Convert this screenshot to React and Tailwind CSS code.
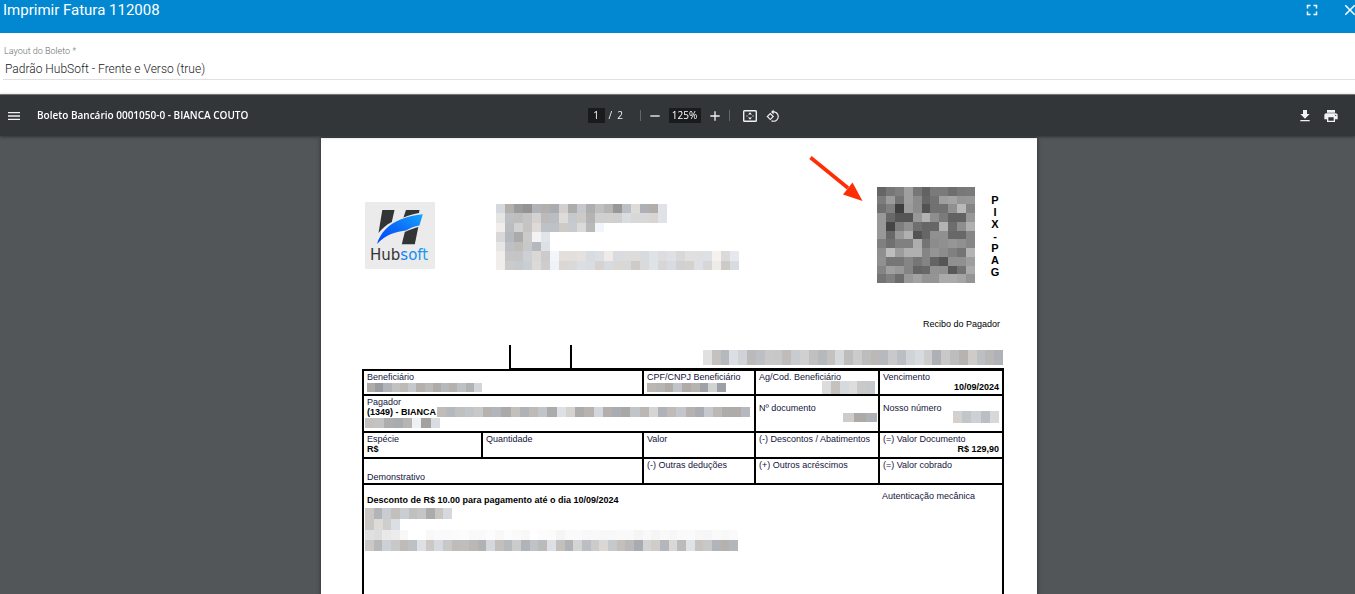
import React from "react";
import { MdFullscreen, MdClose, MdMenu, MdFileDownload, MdPrint, MdRemove, MdAdd } from "react-icons/md";

// Each cell is a two-digit hex grey, optionally followed by "w" (warm) or "c" (cool).
function tone(cell) {
  const v = parseInt(cell.slice(0, 2), 16);
  if (cell[2] === "w") return `rgb(${v + 3},${v - 1},${v - 4})`;
  if (cell[2] === "c") return `rgb(${v - 3},${v},${v + 4})`;
  return `rgb(${v},${v},${v})`;
}

function Mosaic({ rows, className }) {
  const grid = rows.map((r) => r.split(" "));
  const cols = Math.max(...grid.map((r) => r.length));
  return (
    <svg
      aria-hidden="true"
      className={`block shrink-0 ${className}`}
      viewBox={`0 0 ${cols} ${grid.length}`}
      preserveAspectRatio="none"
      shapeRendering="crispEdges"
    >
      {grid.map((row, y) =>
        row.map((cell, x) => <rect key={`${x}-${y}`} x={x} y={y} width="1" height="1" fill={tone(cell)} />)
      )}
    </svg>
  );
}

const address = [
  "d8c b0w 9b 93 b3c b0w acc d0w ac c8c ae c0 b5w 98 bfc dcw b0c aew e2c",
  "e4 bfc be c4 d2w bb bdc dcw c8c cbw b4 d0 d0 cf dcc d8 d8 d6w e2c",
  "eew bcc d2 c4w dbw c1c c1c cbw cac da b9 f5c",
  "d8 b9c ab ca f3 e4c",
  "e6 c0c bdw c8 b8c e0c",
  "eew c5 c5 cfc d8w cb f5c e0w e0w e2w dbc dec ecw dbc dc dc dac e2c dd e0c d8 e0 df e0c f2w da e8c",
  "eew cb c9c cdc da cd f2c d8w d9 dec dcc d3w dac d8w d8 cbw da e2c d6 dbc d1 d2w dfc d7 ecw cbw dbc",
];

const qr = [
  "66 77 80 9f 77 62 7a 7a 6e 78 7a",
  "7c 9c 74 9f 8b 66 72 9f a4 96 98",
  "70 80 3f 9c 8c 52 71 71 90 b9 85",
  "98 68 55 55 98 b2 8e 7b 62 62 98",
  "98 45 7e 90 6f 66 66 b3 6d 8e b0",
  "98 68 98 b0 54 66 90 90 68 68 86",
  "80 70 80 80 ad 74 8c 90 96 90 86",
  "8f bd 9c b0 b0 85 94 8c 80 74 b4",
  "90 76 76 85 76 84 64 55 90 90 9e",
  "84 a0 98 84 64 68 92 90 58 72 aa",
  "74 80 6c 98 a2 94 94 aa aa a4 94",
];

const digitableLine = [
  "e0 c2w b8c dec d2c ba bfc c8 c7 bdw cbc d0 c0 b8c c2w d8c bd cb bd b9w b9c c9 bec d3c dac cd b0c c8 bd b4w ccw bfc b8 b2c",
];
const payer = [
  "bdw b8c c0 c4c c8 b3w b5c aa c0w b2c bbw c4c ab e0c d3w ac b4w d6c b0w acc a8 c4c b8w d5 b2c bcw c6c b3w acc c8c b9w ac acw b8c",
];
const demo1 = ["c8w b4c ccc c0w cdc c0 c5 ab c6w d8c"];
const demo2 = ["c8w dbw ce dec"];
const demo3 = [
  "e0 dd e9 ec f8 ff ff f8 fa fa fb fc f9 f9 fc f8 fc fa f8 ff fc fb f5 fa fa f8 f9 f8 f8 f9 f9 f5 f9 f5 f9 f7 fa fa f7 f6 fa f8 fa",
];
const demo4 = [
  "c9w b8 d0c c8 bcw c0c e0c c9w d9c c8 bdw be b8w b2 d7c c0w b9c cb b3c c2c bb dfc c0w b2c d4 bec cb d8w c8c c0w b9 abc d3 cdw b6c d8 bb e2c c4w c8 b4c b2w b6c",
];

function HubsoftLogo() {
  return (
    <svg role="img" aria-label="Hubsoft" className="mt-[15px] h-[67px] w-[70px] shrink-0" viewBox="0 0 70 67">
      <defs>
        <linearGradient id="swoosh" x1="0" y1="1" x2="1" y2="0">
          <stop offset="0" stopColor="#0046ff" />
          <stop offset="0.5" stopColor="#0b6cf8" />
          <stop offset="1" stopColor="#16a4ff" />
        </linearGradient>
        <linearGradient id="wordmark" x1="0" y1="0" x2="1" y2="0">
          <stop offset="0" stopColor="#0a50fa" />
          <stop offset="1" stopColor="#18a0f2" />
        </linearGradient>
      </defs>
      <rect width="70" height="67" fill="#ebebeb" />
      <path d="M17.300 8h12.200l-2.700 12C21 23 17.300 26.500 13.500 31z" fill="#333436" />
      <path d="M41 8h13.500l-.6 3C49 11.900 44 13.200 38.400 15.500z" fill="#333436" />
      <path d="M39.800 30C44 28 49 26.200 53.300 25L49.800 42.300H36.800z" fill="#333436" />
      <path d="M12 42C15 31.500 23.500 22 35.500 17.500C43 14.500 50 13.200 57.800 12.300L54.400 23.500C49.500 24.200 45.500 26 41 28.500C31.500 29.500 20.500 32.500 12 42z" fill="url(#swoosh)" />
      <text x="5" y="58" fontSize="15" fontFamily="DejaVu Sans, sans-serif" fill="#333436">
        Hub<tspan fill="url(#wordmark)">soft</tspan>
      </text>
    </svg>
  );
}

function FitPageIcon() {
  return (
    <svg viewBox="0 0 14 12" className="h-3 w-[14px]" fill="none" stroke="currentColor" aria-hidden="true">
      <rect x="0.700" y="0.700" width="12.600" height="10.600" rx="0.800" strokeWidth="1.400" />
      <path d="M7 2.200l2 2.400H5zM7 9.800l2-2.400H5z" fill="currentColor" stroke="none" />
      <path d="M3.400 6h1.200M9.400 6h1.200" strokeWidth="1.200" />
    </svg>
  );
}

function RotateIcon() {
  return (
    <svg viewBox="0 0 24 24" className="h-[14px] w-[14px]" fill="currentColor" aria-hidden="true">
      <path d="M7.340 6.410L.860 12.900l6.490 6.480 6.490-6.480-6.500-6.490zM3.690 12.900l3.660-3.660L11 12.900l-3.660 3.660-3.650-3.660zm15.670-6.260C17.610 4.880 15.300 4 13 4V.760L8.760 5 13 9.240V6c1.790 0 3.580.680 4.950 2.050 2.730 2.730 2.730 7.170 0 9.900C16.580 19.320 14.790 20 13 20c-.970 0-1.940-.210-2.840-.610l-1.490 1.490C10.020 21.620 11.510 22 13 22c2.300 0 4.610-.880 6.360-2.640 3.520-3.510 3.520-9.210 0-12.720z" />
    </svg>
  );
}

function Cell({ children, top = "pt-px", ...rest }) {
  return (
    <td className={`border-2 border-black pr-[3px] pb-0 pl-[3px] align-top ${top}`} {...rest}>
      {children}
    </td>
  );
}

function Toolbar() {
  const field = "h-[15px] bg-[#191b1c] text-center text-[10px] leading-[15px] text-white outline-none";
  return (
    <div className="z-10 grid h-[42px] shrink-0 grid-cols-[1fr_auto_1fr] items-center border-t border-[#74787a] bg-[#323639] pl-3 font-['Open_Sans','Noto_Sans',sans-serif] text-[#f1f1f1] shadow-[0_1px_3px_rgba(0,0,0,0.4)]">
      <div className="flex items-center gap-[15px]">
        <button type="button" aria-label="Menu" className="-ml-1.5">
          <MdMenu size={16} />
        </button>
        <h2 className="text-[10px] font-semibold whitespace-nowrap text-white">Boleto Bancário 0001050-0 - BIANCA COUTO</h2>
      </div>
      <div className="flex items-center gap-[9px]">
        <div className="flex w-[43px] items-center gap-1 text-[10px] leading-[15px]">
          <input aria-label="Página" defaultValue="1" className={`w-[17px] ${field}`} />
          <span className="whitespace-pre">/  2</span>
        </div>
        <span className="h-[11px] w-px bg-[#62666a]" />
        <button type="button" aria-label="Reduzir" className="-mx-[3px]">
          <MdRemove size={16} />
        </button>
        <input aria-label="Zoom" defaultValue="125%" className={`w-8 ${field}`} />
        <button type="button" aria-label="Ampliar" className="-mx-[3px]">
          <MdAdd size={16} />
        </button>
        <span className="h-[11px] w-px bg-[#62666a]" />
        <button type="button" aria-label="Ajustar à página" className="ml-1">
          <FitPageIcon />
        </button>
        <button type="button" aria-label="Girar">
          <RotateIcon />
        </button>
      </div>
      <div className="flex items-center justify-end gap-[10px] pr-4">
        <button type="button" aria-label="Baixar">
          <MdFileDownload size={16} />
        </button>
        <button type="button" aria-label="Imprimir">
          <MdPrint size={16} />
        </button>
      </div>
    </div>
  );
}

function Boleto() {
  return (
    <article className="relative mx-auto min-h-[1012px] w-full max-w-[716px] bg-white pt-[49px] pr-[33px] pl-[41px] font-['Liberation_Sans',Arial,sans-serif] text-[9px] leading-[10px] text-[#14143c] shadow-[0_0_4px_rgba(0,0,0,0.5)]">
      <svg aria-hidden="true" className="absolute top-[17px] left-[487px] h-12 w-14" viewBox="0 0 56 48">
        <path d="M2.500 2.500L40 33" stroke="#ff2d05" strokeWidth="3.600" />
        <path d="M54.500 46L44.500 27.500L35 39.500z" fill="#ff2d05" />
      </svg>

      <header className="flex items-start pl-[3px]">
        <HubsoftLogo />
        <Mosaic rows={address} className="mt-[17px] ml-[61px] h-[66px] w-[243px]" />
        <Mosaic rows={qr} className="ml-auto h-24 w-[98px]" />
        <p className="mt-[7px] mr-1 ml-[15px] flex w-[10px] flex-col items-center text-[11px] leading-[12px] font-bold text-black">
          {"PIX-PAG".split("").map((c, i) => (
            <span key={i}>{c}</span>
          ))}
        </p>
      </header>

      <p className="mt-9 pr-1 text-right text-black">Recibo do Pagador</p>

      <div className="mt-4 ml-[147px] flex h-6 border-b border-black">
        <div className="w-[63px] border-x-2 border-black" />
        <Mosaic rows={digitableLine} className="mt-[5px] mr-px ml-auto h-[15px] w-[300px]" />
      </div>

      <table className="w-full table-fixed border-collapse border-2 border-black">
        <colgroup>
          <col className="w-[119px]" />
          <col />
          <col className="w-[112px]" />
          <col className="w-[124px]" />
          <col className="w-[124px]" />
        </colgroup>
        <tbody>
          <tr className="h-[25px]">
            <Cell colSpan={2}>
              Beneficiário
              <Mosaic rows={["acw 9bc b3c c1 bbw c8c b1w b9 acw b8c b2w c0c b2 d5c"]} className="mt-px h-[9px] w-[115px]" />
            </Cell>
            <Cell>
              CPF/CNPJ Beneficiário
              <Mosaic rows={["b8w b5 acw c3c acw b4w a1c d2 a0c"]} className="mt-px h-[9px] w-[79px]" />
            </Cell>
            <Cell>
              Ag/Cod. Beneficiário
              <Mosaic rows={["dc c2w d9c dd c9 c8c"]} className="-mt-px ml-auto h-[13px] w-[53px]" />
            </Cell>
            <Cell>
              Vencimento
              <strong className="block text-right text-black">10/09/2024</strong>
            </Cell>
          </tr>
          <tr className="h-[37px]">
            <Cell colSpan={3}>
              Pagador
              <div className="flex items-center gap-px">
                <strong className="whitespace-nowrap text-black">(1349) - BIANCA</strong>
                <Mosaic rows={payer} className="h-[10px] w-[313px]" />
              </div>
              <Mosaic rows={["c1w c3 aeb abc b5w f0c a2w dcc"]} className="-ml-0.5 mt-px h-[10px] w-[75px]" />
            </Cell>
            <Cell top="pt-[7px]">
              Nº documento
              <Mosaic rows={["cc aaw b0c"]} className="-mr-0.5 ml-auto h-[9px] w-[34px]" />
            </Cell>
            <Cell top="pt-[7px]">
              Nosso número
              <Mosaic rows={["d1w c5c d0c bec d8"]} className="-mt-0.5 ml-auto h-3 w-[46px]" />
            </Cell>
          </tr>
          <tr className="h-[26px]">
            <Cell>
              Espécie
              <strong className="block text-black">R$</strong>
            </Cell>
            <Cell>Quantidade</Cell>
            <Cell>Valor</Cell>
            <Cell>(-) Descontos / Abatimentos</Cell>
            <Cell>
              (=) Valor Documento
              <strong className="block text-right text-black">R$ 129,90</strong>
            </Cell>
          </tr>
          <tr className="h-[26px]">
            <Cell colSpan={2} top="pt-[13px]">Demonstrativo</Cell>
            <Cell>(-) Outras deduções</Cell>
            <Cell>(+) Outros acréscimos</Cell>
            <Cell>(=) Valor cobrado</Cell>
          </tr>
          <tr className="h-[260px]">
            <Cell colSpan={5}>
              <div className="flex justify-between pt-[5px] pr-6">
                <strong className="pt-1 text-black">Desconto de R$ 10.00 para pagamento até o dia 10/09/2024</strong>
                <span>Autenticação mecânica</span>
              </div>
              <div className="-ml-0.5 pt-[3px]">
                <Mosaic rows={demo1} className="h-[11px] w-[87px]" />
                <Mosaic rows={demo2} className="h-[11px] w-[35px]" />
                <Mosaic rows={demo3} className="h-[10px] w-[373px]" />
                <Mosaic rows={demo4} className="h-[11px] w-[373px]" />
              </div>
            </Cell>
          </tr>
        </tbody>
      </table>
    </article>
  );
}

export default function App() {
  return (
    <div className="flex h-screen flex-col overflow-hidden bg-white font-['Roboto',sans-serif]">
      <header className="flex h-[33px] shrink-0 items-start justify-between bg-[#0288d1] pl-[3px] text-white">
        <h1 className="text-[15px] leading-5">Imprimir Fatura 112008</h1>
        <div className="-mr-[4px] flex gap-5 pt-px">
          <button type="button" aria-label="Tela cheia">
            <MdFullscreen size={18} />
          </button>
          <button type="button" aria-label="Fechar">
            <MdClose size={18} />
          </button>
        </div>
      </header>

      <div className="flex shrink-0 flex-col pt-3 pb-[14px] pl-[3px]">
        <label htmlFor="layout" className="pl-px text-[9px] leading-3 font-light text-[#6c6c6c]">
          Layout do Boleto *
        </label>
        <select
          id="layout"
          className="h-[23px] appearance-none border-b border-[#e0e0e0] bg-transparent pt-0.5 pl-0.5 text-[12px] font-light text-[#222] outline-none"
        >
          <option>Padrão HubSoft - Frente e Verso (true)</option>
        </select>
      </div>

      <Toolbar />

      <main className="min-h-0 flex-1 overflow-y-auto bg-[#525659] pt-0.5 pl-[3px] [scrollbar-width:none]">
        <Boleto />
      </main>
    </div>
  );
}
